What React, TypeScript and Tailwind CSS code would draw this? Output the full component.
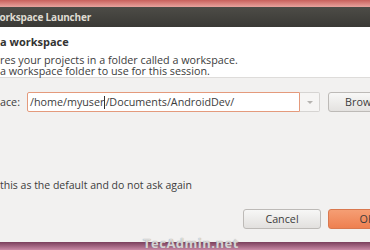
export default function App() {
    return (
        <div
            className="relative w-[370px] h-[250px] overflow-hidden flex flex-col bg-[#f2f1f0] text-[#3c3c3c]"
            style={{ fontFamily: '"Open Sans", "DejaVu Sans", sans-serif' }}
        >
            {/* desktop strip */}
            <div className="h-[7px] shrink-0 bg-gradient-to-b from-[#c8605c] to-[#e9a39e]" />

            {/* title bar */}
            <div className="h-[20px] shrink-0 flex items-center bg-gradient-to-b from-[#4d4c47] to-[#3a3935]">
                <span className="ml-[-10px] text-[10px] font-bold tracking-[-0.2px] text-[#dfdbd2] leading-none">
                    Workspace Launcher
                </span>
            </div>

            {/* header */}
            <div className="h-[51px] shrink-0 bg-white border-b border-[#dedcda] pt-[8px]">
                <div className="text-[11px] font-bold leading-[14px] text-[#333]">a workspace</div>
                <div className="mt-[6px] text-[10.75px] leading-[11px] text-[#3c3c3c]">
                    res your projects in a folder called a workspace.
                </div>
                <div className="text-[10.75px] leading-[11px] text-[#3c3c3c]">
                    a workspace folder to use for this session.
                </div>
            </div>

            {/* workspace row */}
            <div className="mt-[14px] flex items-center h-[20px] text-[10.75px]">
                <span className="w-[27px] shrink-0">ace:</span>
                <div className="w-[273px] h-[20px] shrink-0 flex items-center bg-white border border-[#e49a7c] rounded-l-[2px] pl-[2px]">
                    <span>/home/myuser</span>
                    <span className="w-px h-[13px] bg-[#333]" />
                    <span>/Documents/AndroidDev/</span>
                </div>
                <div className="w-[20px] h-[20px] shrink-0 flex items-center justify-center bg-[#f6f5f4] border border-[#d6d4d2] border-l-0 rounded-r-[2px]">
                    <span className="w-0 h-0 border-l-[3px] border-r-[3px] border-t-[3px] border-l-transparent border-r-transparent border-t-[#b5b3b0]" />
                </div>
                <button className="ml-[8px] w-[80px] h-[20px] shrink-0 flex items-center justify-center rounded-[3px] border border-[#bdbab7] bg-gradient-to-b from-[#f8f8f7] to-[#e4e2e0] text-[10.75px]">
                    Browse...
                </button>
            </div>

            {/* checkbox line */}
            <div className="mt-[67px] text-[10.5px] leading-[13px]">
                this as the default and do not ask again
            </div>

            {/* buttons */}
            <div className="mt-[17px] flex h-[20px]">
                <div className="w-[243px] shrink-0" />
                <button className="w-[78px] h-[20px] shrink-0 flex items-center justify-center rounded-[3px] border border-[#bdbab7] bg-gradient-to-b from-[#f7f7f6] to-[#e2e0de] text-[10.75px]">
                    Cancel
                </button>
                <button className="ml-[7px] w-[78px] h-[20px] shrink-0 flex items-center justify-center rounded-[3px] border border-[#d9784e] bg-gradient-to-b from-[#f59e74] to-[#ee8050] text-[10.75px]">
                    OK
                </button>
            </div>

            {/* desktop bottom */}
            <div className="mt-auto h-[8px] shrink-0 bg-gradient-to-b from-[#7a3f5c] to-[#c98aa6]" />

            {/* watermark */}
            <div
                className="absolute left-[143px] top-[234px] text-[13px] font-bold tracking-[0.5px] text-white/70"
                style={{ textShadow: '0 0 1px #777' }}
            >
                TecAdmin.net
            </div>
        </div>
    );
}
